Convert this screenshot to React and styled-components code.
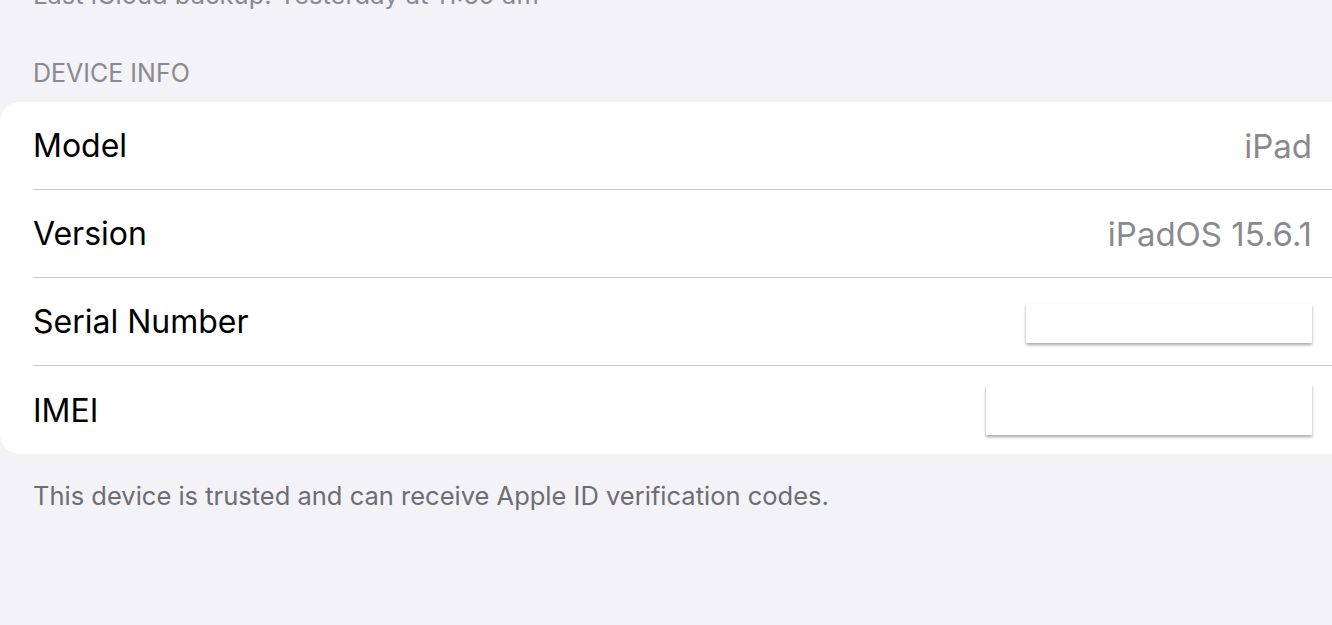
import React from 'react';
import styled, { createGlobalStyle } from 'styled-components';

const GlobalStyle = createGlobalStyle`
  html, body {
    margin: 0;
    padding: 0;
    background: #f2f2f7;
    overflow: hidden;
    font-family: Inter, "Liberation Sans", sans-serif;
  }
`;

const Page = styled.div`
  width: 1332px;
  height: 625px;
  background: #f2f2f7;
  overflow: hidden;
`;

const Note = styled.p`
  margin: 0;
  padding-left: 33px;
  font-size: ${(p) => p.$size || 24}px;
  line-height: 30px;
  color: ${(p) => p.$dark ? '#6d6d72' : '#8a8a8e'};
  margin-top: ${(p) => p.$offset || 0}px;
`;

const SectionHeader = styled.div`
  padding: 0 0 0 33px;
  margin-top: 48px;
  height: 44px;
  font-size: 25px;
  line-height: 30px;
  color: #8a8a8e;
  text-transform: uppercase;
`;

const Card = styled.div`
  background: #fff;
  border-radius: 20px;
  margin-right: -30px;
`;

const Row = styled.div`
  height: 88px;
  margin-left: 33px;
  padding-right: 50px;
  display: flex;
  align-items: center;
  justify-content: space-between;
  border-bottom: ${(p) => p.$last ? 'none' : '1px solid #c8c7cc'};
  box-sizing: border-box;
`;

const Label = styled.span`
  font-size: 32px;
  color: #000;
`;

const Value = styled.span`
  font-size: 33px;
  color: #8a8a8e;
`;

const Redact = styled.div`
  width: ${(p) => p.$w}px;
  height: ${(p) => p.$h}px;
  background: #fff;
  box-shadow: 0 2px 3px rgba(0, 0, 0, 0.35);
  margin-top: ${(p) => p.$dy || 0}px;
`;

export default function App() {
  return (
    <Page>
      <GlobalStyle />
      <Note $size={25.5} $offset={-20}>Last iCloud backup: Yesterday at 11:59 am</Note>
      <SectionHeader>Device Info</SectionHeader>
      <Card>
        <Row>
          <Label>Model</Label>
          <Value>iPad</Value>
        </Row>
        <Row>
          <Label>Version</Label>
          <Value>iPadOS 15.6.1</Value>
        </Row>
        <Row>
          <Label>Serial Number</Label>
          <Redact $w={286} $h={39} $dy={4} />
        </Row>
        <Row $last>
          <Label>IMEI</Label>
          <Redact $w={326} $h={50} />
        </Row>
      </Card>
      <Note $dark $size={25.5} $offset={27}>This device is trusted and can receive Apple ID verification codes.</Note>
    </Page>
  );
}
